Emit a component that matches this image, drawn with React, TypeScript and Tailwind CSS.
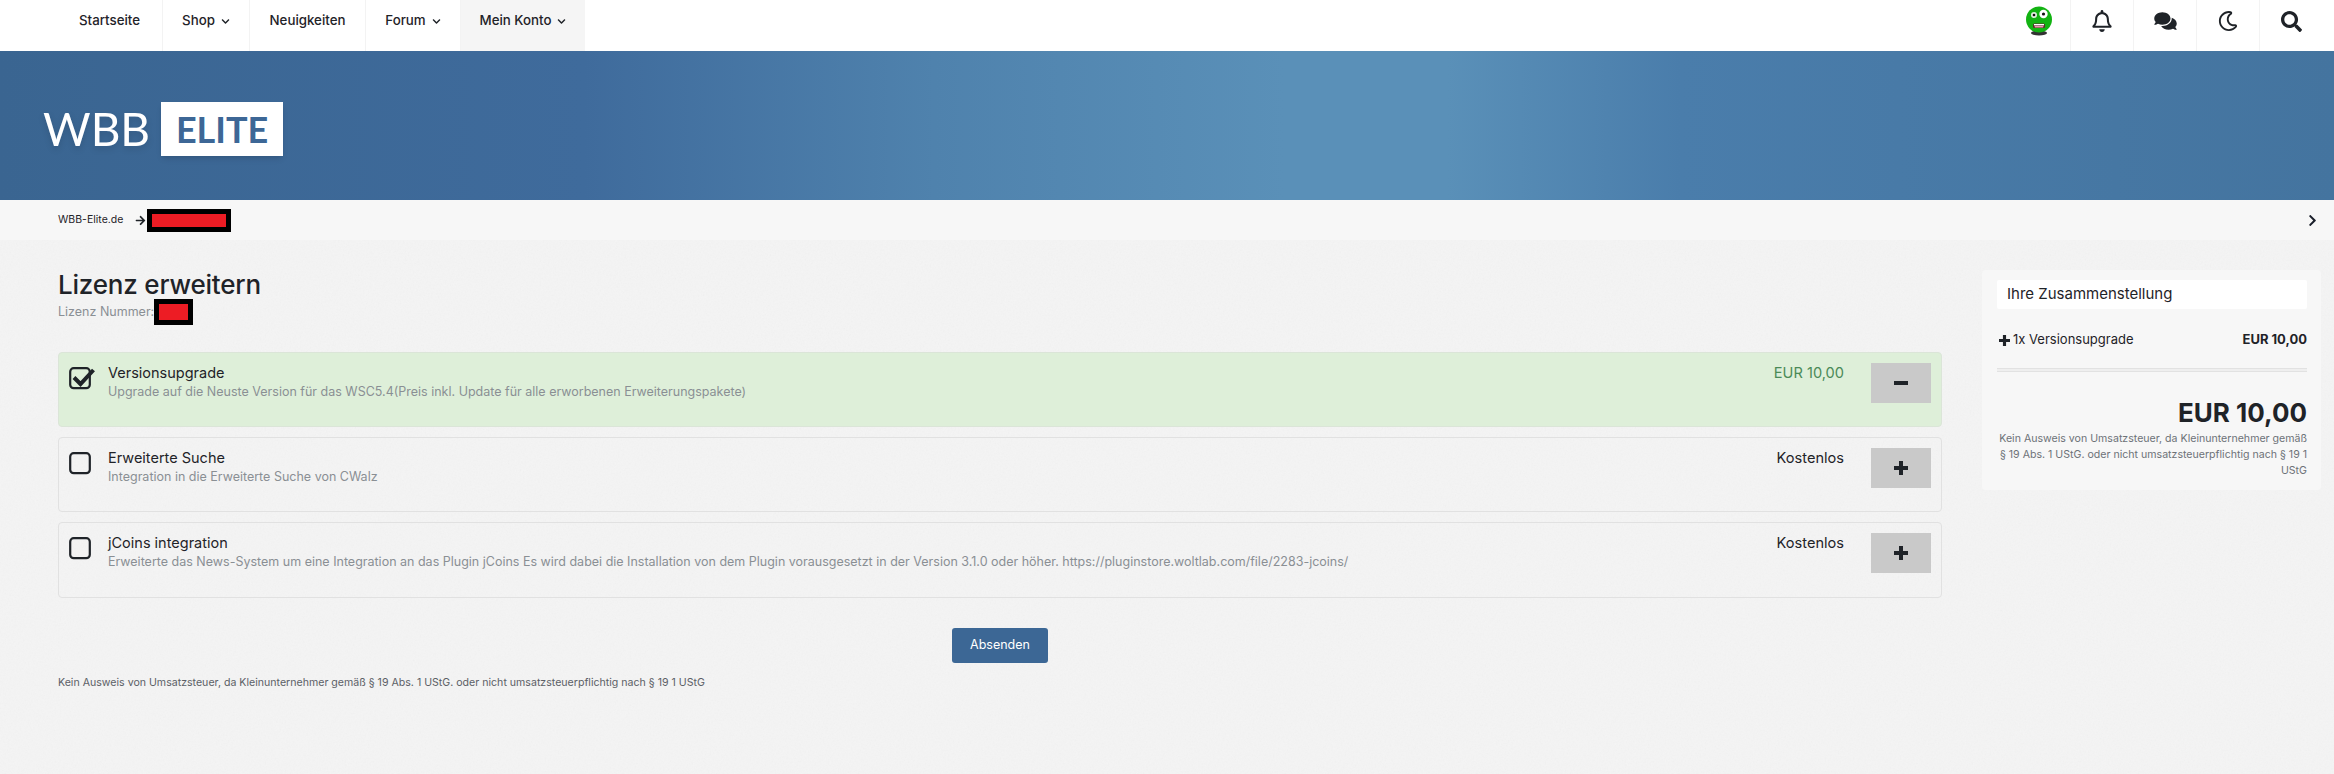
import React from 'react';
import {
  FaArrowRight,
  FaChevronDown,
  FaChevronRight,
  FaComments,
  FaRegBell,
  FaRegMoon,
  FaSearch,
} from 'react-icons/fa';

const navItems = [
  { label: 'Startseite', sub: false, width: 'w-[105px]', active: false },
  { label: 'Shop', sub: true, width: 'w-[87px]', active: false },
  { label: 'Neuigkeiten', sub: false, width: 'w-[116px]', active: false },
  { label: 'Forum', sub: true, width: 'w-[95px]', active: false },
  { label: 'Mein Konto', sub: true, width: 'w-[125px]', active: true },
];

const options = [
  {
    title: 'Versionsupgrade',
    text: 'Upgrade auf die Neuste Version für das WSC5.4(Preis inkl. Update für alle erworbenen Erweiterungspakete)',
    price: 'EUR 10,00',
    selected: true,
    height: 'h-[75px]',
  },
  {
    title: 'Erweiterte Suche',
    text: 'Integration in die Erweiterte Suche von CWalz',
    price: 'Kostenlos',
    selected: false,
    height: 'h-[75px]',
  },
  {
    title: 'jCoins integration',
    text: 'Erweiterte das News-System um eine Integration an das Plugin jCoins Es wird dabei die Installation von dem Plugin vorausgesetzt in der Version 3.1.0 oder höher. https://pluginstore.woltlab.com/file/2283-jcoins/',
    price: 'Kostenlos',
    selected: false,
    height: 'h-[76px]',
  },
];

const Avatar = () => (
  <svg viewBox="0 0 28 30" className="w-[28px] h-[30px]">
    <ellipse cx="14" cy="27" rx="8" ry="2.5" fill="#333" />
    <ellipse cx="14" cy="13.5" rx="13" ry="13" fill="#12b312" />
    <circle cx="9" cy="9" r="3" fill="#dfeedd" />
    <circle cx="18.5" cy="8" r="4.2" fill="#fff" />
    <circle cx="9" cy="9" r="1.3" fill="#111" />
    <circle cx="18.5" cy="8" r="1.6" fill="#111" />
    <rect x="8" y="17.5" width="12" height="4.5" rx="1.5" fill="#5a2a2a" />
    <rect x="9" y="18" width="10" height="1.4" fill="#fff" />
    <rect x="9.5" y="20" width="9" height="1.5" rx="0.7" fill="#e8a0b0" />
  </svg>
);

const CheckBox = ({ checked }: { checked: boolean }) => (
  <svg viewBox="0 0 26 24" className="w-[26px] h-[24px] shrink-0 overflow-visible">
    <rect x="1.2" y="2.2" width="19.6" height="20" rx="3.5" fill="none" stroke="#1f2328" strokeWidth="2.2" />
    {checked && <polyline points="5,11.5 11.5,18 24.5,4" fill="none" stroke="#1f2328" strokeWidth="4" />}
  </svg>
);

const PlusIcon = ({ className }: { className: string }) => (
  <svg viewBox="0 0 14 14" className={className} fill="currentColor">
    <path d="M5 0h4v5h5v4H9v5H5V9H0V5h5z" />
  </svg>
);

const MinusIcon = ({ className }: { className: string }) => (
  <svg viewBox="0 0 14 14" className={className} fill="currentColor">
    <rect x="0" y="5" width="14" height="4" />
  </svg>
);

const Redacted = ({ className }: { className: string }) => (
  <span className={`inline-block border-[5px] border-black bg-[#ed1c24] ${className}`} />
);

export default function App() {
  return (
    <div className="min-h-screen w-full flex flex-col bg-[#f4f4f4] text-[#1f2328] font-['Inter','Open_Sans',sans-serif]">
      <header className="h-[51px] bg-white flex justify-between pl-[57px] pr-[12px]">
        <nav className="flex">
          {navItems.map((item, i) => (
            <a
              key={item.label}
              className={`${item.width} flex items-center justify-center gap-[6px] pb-[9px] text-[13.3px] font-medium ${
                i > 0 ? 'border-l border-[#f3f3f3]' : ''
              } ${item.active ? 'bg-[#f5f5f5]' : ''}`}
            >
              {item.label}
              {item.sub && <FaChevronDown className="w-[9px] h-[9px]" />}
            </a>
          ))}
        </nav>
        <div className="flex">
          <div className="w-[63px] flex items-center justify-center pb-[9px]">
            <Avatar />
          </div>
          <div className="w-[63px] flex items-center justify-center pb-[9px] border-l border-[#f3f3f3]">
            <FaRegBell className="w-[20px] h-[22px]" />
          </div>
          <div className="w-[63px] flex items-center justify-center pb-[9px] border-l border-[#f3f3f3]">
            <FaComments className="w-[23px] h-[20px]" />
          </div>
          <div className="w-[63px] flex items-center justify-center pb-[9px] border-l border-[#f3f3f3]">
            <FaRegMoon className="w-[20px] h-[20px]" />
          </div>
          <div className="w-[63px] flex items-center justify-center pb-[9px] border-l border-[#f3f3f3]">
            <FaSearch className="w-[21px] h-[21px]" />
          </div>
        </div>
      </header>

      <div className="h-[149px] flex items-center pl-[43px] pt-[6px] bg-[linear-gradient(90deg,#3a6591_0%,#3f6b9c_25%,#4f82ad_40%,#5a90b8_55%,#5a90b8_62%,#4a7dab_72%,#44749f_100%)]">
        <div className="flex items-center gap-[11px]">
          <span className="text-[46px] leading-none text-white font-['Lato',sans-serif] drop-shadow-md">WBB</span>
          <span className="w-[122px] h-[54px] bg-white flex items-center justify-center text-[36px] font-bold leading-none text-[#3d6796] font-['Lato',sans-serif] shadow-md">
            ELITE
          </span>
        </div>
      </div>

      <div className="h-[40px] bg-[#f7f7f7] flex items-center justify-between pl-[58px] pr-[16px]">
        <div className="flex items-center">
          <span className="text-[10.5px]">WBB-Elite.de</span>
          <FaArrowRight className="w-[11px] h-[11px] ml-[12px] mr-[1px]" />
          <Redacted className="w-[84px] h-[23px]" />
        </div>
        <FaChevronRight className="w-[11px] h-[13px] text-[#1a1f2b]" />
      </div>

      <main className="relative flex-1 flex gap-[40px] pl-[58px] pr-[13px] pt-[30px]">
        <svg className="absolute inset-0 w-full h-full pointer-events-none opacity-[0.05]">
          <filter id="paper">
            <feTurbulence type="fractalNoise" baseFrequency="0.6" numOctaves="3" />
            <feColorMatrix type="saturate" values="0" />
          </filter>
          <rect width="100%" height="100%" filter="url(#paper)" />
        </svg>

        <section className="relative flex-1 min-w-0 pt-[2px]">
          <h1 className="text-[26px] leading-[26px] font-medium tracking-[-0.2px]">Lizenz erweitern</h1>
          <div className="flex items-center h-[28px] text-[12.5px] text-[#8a8f94]">
            Lizenz Nummer:
            <Redacted className="w-[39px] h-[26px]" />
          </div>

          <div className="mt-[26px] flex flex-col gap-[10px]">
            {options.map((opt) => (
              <div
                key={opt.title}
                className={`${opt.height} flex rounded-[4px] border pl-[10px] pr-[10px] pt-[10px] ${
                  opt.selected ? 'bg-[#deefd9] border-[#dbe5d8]' : 'border-[#e1e1e1]'
                }`}
              >
                <div className="pt-[3px] w-[39px] shrink-0">
                  <CheckBox checked={opt.selected} />
                </div>
                <div className="flex-1 min-w-0">
                  <div className="text-[14.5px] leading-[20px]">{opt.title}</div>
                  <div className="text-[12.5px] leading-[18px] text-[#8a8f94]">{opt.text}</div>
                </div>
                <div
                  className={`text-[14.6px] leading-[20px] mr-[27px] ${opt.selected ? 'text-[#4a8a57]' : ''}`}
                >
                  {opt.price}
                </div>
                <button className="w-[60px] h-[40px] bg-[#c9c9c9] flex items-center justify-center">
                  {opt.selected ? <MinusIcon className="w-[14px] h-[14px]" /> : <PlusIcon className="w-[14px] h-[14px]" />}
                </button>
              </div>
            ))}
          </div>

          <div className="flex justify-center mt-[30px]">
            <button className="w-[96px] h-[35px] rounded-[3px] bg-[#3c6795] text-white text-[12.5px]">
              Absenden
            </button>
          </div>

          <p className="mt-[12px] text-[10.6px] leading-[16px] text-[#5b6066]">
            Kein Ausweis von Umsatzsteuer, da Kleinunternehmer gemäß § 19 Abs. 1 UStG. oder nicht umsatzsteuerpflichtig nach § 19 1 UStG
          </p>
        </section>

        <aside className="relative w-[339px] h-[220px] shrink-0 rounded-[4px] bg-[#f7f7f7] pl-[15px] pr-[14px] pt-[10px]">
          <div className="h-[29px] bg-white rounded-[2px] pl-[10px] flex items-center text-[15px]">
            Ihre Zusammenstellung
          </div>
          <div className="flex justify-between items-center mt-[20px] h-[22px] text-[13px]">
            <span className="flex items-center gap-[3px] pl-[2px]">
              <PlusIcon className="w-[11px] h-[11px]" />
              1x Versionsupgrade
            </span>
            <span className="font-bold">EUR 10,00</span>
          </div>
          <div className="mt-[17px] h-[4px] border-y border-[#e2e2e2] bg-[#efefef]" />
          <div className="mt-[25px] text-right text-[26px] leading-[32px] font-bold">EUR 10,00</div>
          <p className="mt-[2px] text-right text-[10.6px] leading-[16px] text-[#6d7277]">
            Kein Ausweis von Umsatzsteuer, da Kleinunternehmer gemäß § 19 Abs. 1 UStG. oder nicht umsatzsteuerpflichtig nach § 19 1 UStG
          </p>
        </aside>
      </main>
    </div>
  );
}
